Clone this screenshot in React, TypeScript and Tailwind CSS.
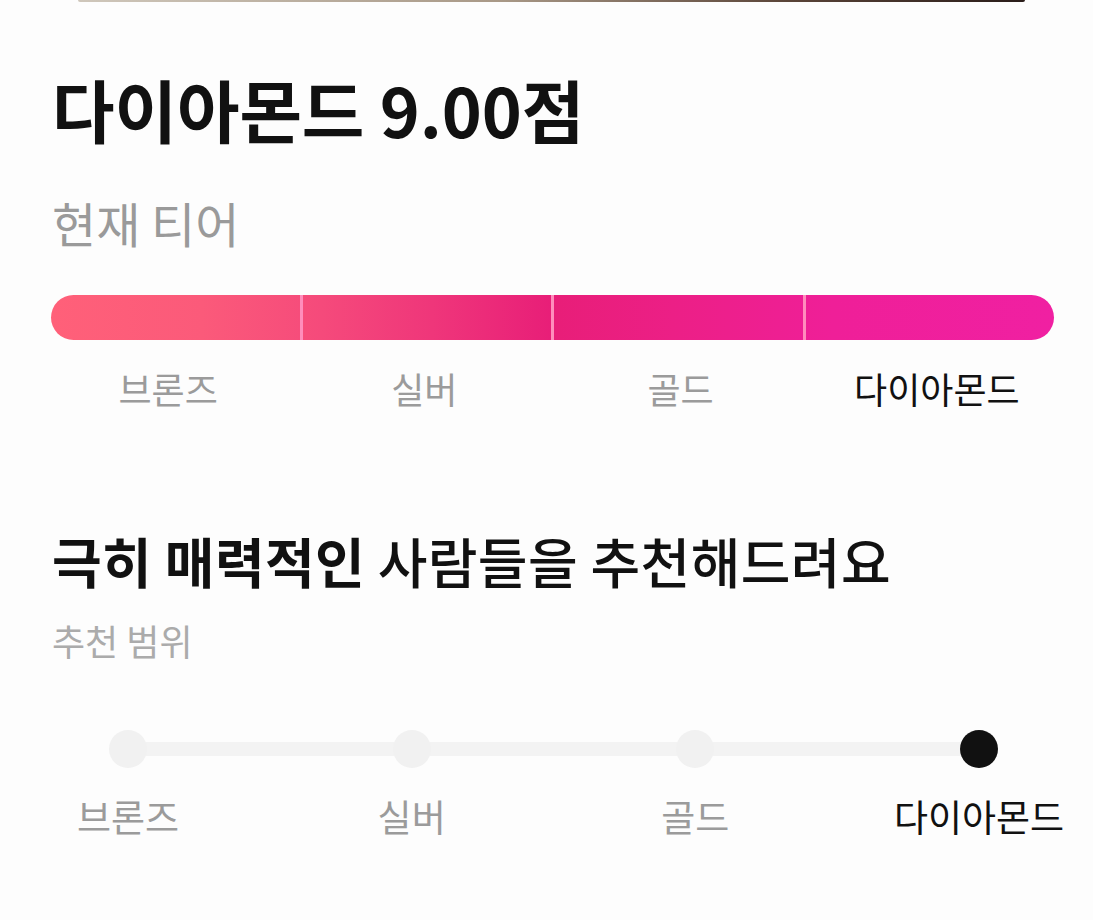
const tiers = ["브론즈", "실버", "골드", "다이아몬드"];

export default function App() {
  return (
    <div className="min-h-[920px] w-full bg-[#fdfdfd] font-['Noto_Sans_CJK_KR','Noto_Sans',sans-serif] text-[#111111]">
      {/* bottom edge of the profile photo card above */}
      <div className="ml-[78px] mr-[68px] h-[2px] rounded-b-full bg-[linear-gradient(90deg,#cfc7bb_0%,#a89886_45%,#5a4438_75%,#2a1d1a_100%)]" />

      <section className="pl-[51px] pr-[39px]">
        <h1 className="mt-[73px] pl-[1px] text-[68px] font-bold leading-[68px] tracking-[-0.1px]">
          다이아몬드 9.00점
        </h1>
        <p className="mt-[55px] pl-[1px] text-[48px] leading-[48px] text-[#9a9a9a]">현재 티어</p>

        {/* current tier bar */}
        <div className="mt-[49px] flex h-[45px] overflow-hidden rounded-full bg-[linear-gradient(90deg,#ff6079_0%,#fb5a7a_15%,#f54a7b_27%,#ef367a_38%,#e81e78_50%,#ec1f86_62%,#ef1f98_78%,#f020a2_100%)]">
          <div className="flex-1" />
          <div className="flex-1 border-l-[3px] border-[#ff8dbc]" />
          <div className="flex-1 border-l-[3px] border-[#ff8dbc]" />
          <div className="flex-1 border-l-[3px] border-[#ff8dbc]" />
        </div>
        <div className="mx-[-11px] mt-[30px] grid grid-cols-4 text-center text-[36px] leading-[36px]">
          {tiers.map((t, i) => (
            <span key={t} className={i === 3 ? "text-[#111111]" : "text-[#9b9b9b]"}>
              {t}
            </span>
          ))}
        </div>

        <h2 className="mt-[128px] pl-[1px] text-[54px] leading-[54px] tracking-[0.4px]">
          <span className="font-bold">극히 매력적인</span>{" "}
          <span className="font-medium">사람들을 추천해드려요</span>
        </h2>
        <p className="mt-[34px] pl-[1px] text-[36px] leading-[36px] text-[#ababab]">추천 범위</p>

        {/* recommendation range slider */}
        <div className="relative ml-[58px] mt-[72px] w-[889px]">
          <div className="absolute left-[19px] right-[19px] top-[12px] h-[14px] bg-[#f3f3f3]" />
          <div className="relative flex justify-between">
            {tiers.map((t, i) => (
              <div key={t} className="flex w-[38px] flex-col items-center">
                <div
                  className={
                    i === 3
                      ? "h-[38px] w-[38px] rounded-full bg-[#111111]"
                      : "h-[38px] w-[38px] rounded-full bg-[#f1f1f1]"
                  }
                />
                <span
                  className={
                    i === 3
                      ? "mt-[30px] whitespace-nowrap text-[37px] leading-[37px] text-[#111111]"
                      : "mt-[30px] whitespace-nowrap text-[37px] leading-[37px] text-[#9b9b9b]"
                  }
                >
                  {t}
                </span>
              </div>
            ))}
          </div>
        </div>
      </section>
    </div>
  );
}
